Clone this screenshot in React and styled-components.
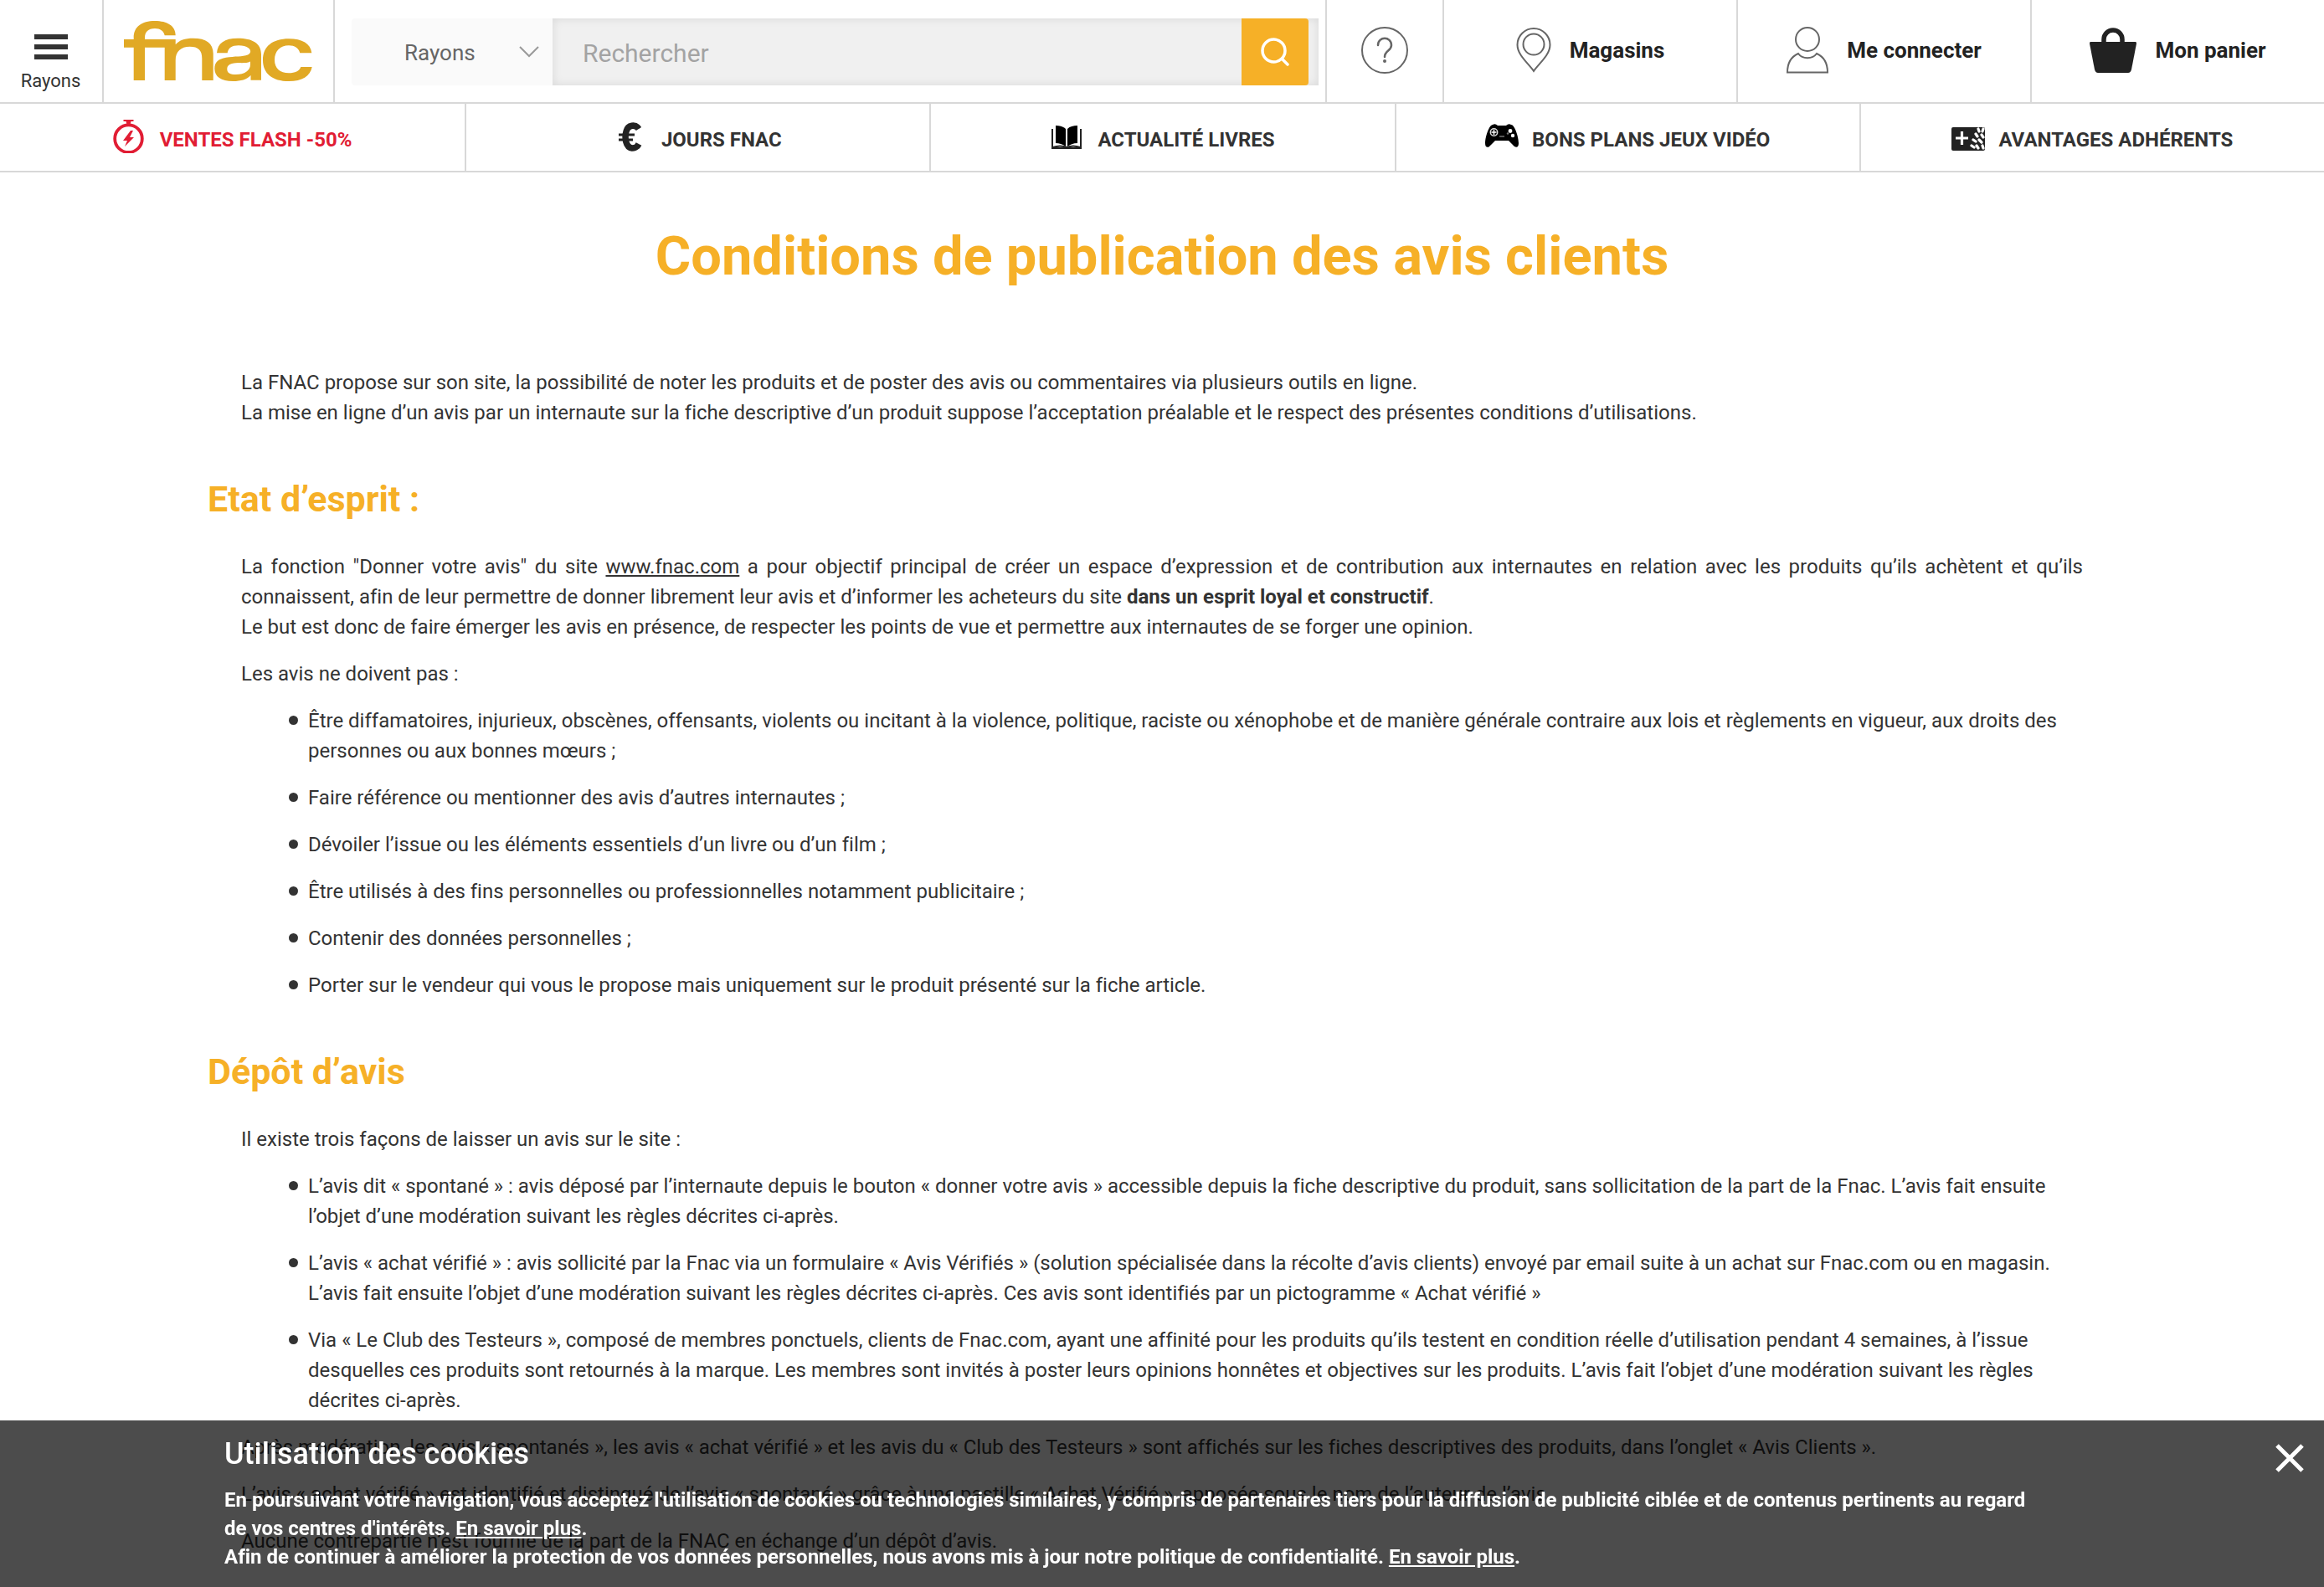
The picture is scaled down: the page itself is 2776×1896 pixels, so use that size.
import React from 'react';
import styled, { createGlobalStyle } from 'styled-components';

const Global = createGlobalStyle`
  *, *::before, *::after { box-sizing: border-box; }
  body {
    margin: 0;
    background: #fff;
    color: #333;
    font: 24px/36px Roboto, "Liberation Sans", sans-serif;
    text-rendering: optimizeSpeed;
  }
  a { color: inherit; }
  button, input, select { font-family: inherit; text-rendering: inherit; }
`;
const line = '#d8d8d8';

const TopBar = styled.header`
  display: flex;
  height: 124px;
  border-bottom: 2px solid ${line};
`;
const MenuButton = styled.button`
  width: 124px;
  padding: 41px 1px 0 0;
  border: 0;
  border-right: 2px solid ${line};
  background: none;
  color: #333;
  font-size: 22px;
  line-height: 30px;
  display: flex;
  flex-direction: column;
  align-items: center;
  gap: 11px;
`;
const Burger = styled.span`
  width: 40px;
  height: 30px;
  border-top: 6px solid #333;
  border-bottom: 6px solid #333;
  padding: 6px 0;
  background: #333 content-box;
`;
const Logo = styled.a`
  width: 276px;
  border-right: 2px solid ${line};
  padding: 24px 0 0 24px;
  line-height: 0;
`;
const Search = styled.form`
  flex: 1;
  display: flex;
  height: 80px;
  margin: 22px 8px 0 20px;
`;
const SelectBox = styled.label`
  width: 240px;
  display: flex;
  align-items: center;
  background: #fafafa;
  border-radius: 4px 0 0 4px;
  padding-right: 16px;
`;
const Select = styled.select`
  flex: 1;
  height: 80px;
  padding: 2px 0 0 63px;
  appearance: none;
  border: 0;
  background: none;
  color: #666;
  font-size: 26px;
`;
const Field = styled.div`
  flex: 1;
  display: flex;
  padding-right: 12px;
  background: #f0f0f0;
  box-shadow: inset 0 0 12px rgba(0, 0, 0, 0.1);
`;
const Input = styled.input`
  flex: 1;
  min-width: 0;
  border: 0;
  padding: 3px 36px 0;
  background: none;
  font-size: 30px;
  &::placeholder { color: #a3a3a3; opacity: 1; }
`;
const SearchButton = styled.button`
  width: 80px;
  border: 0;
  border-radius: 0 4px 4px 0;
  padding: 0;
  background: #f6b027;
  display: grid;
  place-items: center;
`;
const Account = styled.a`
  width: ${(p) => p.$width || 351}px;
  border-left: 2px solid ${line};
  display: flex;
  align-items: center;
  justify-content: center;
  gap: 22px;
  padding-bottom: 2px;
  font-size: 26px;
  font-weight: 700;
  color: #222;
  text-decoration: none;
`;
const Nav = styled.nav`
  display: grid;
  grid-template-columns: repeat(5, 1fr);
  height: 82px;
  border-bottom: 2px solid ${line};
`;
const NavLink = styled.a`
  display: flex;
  align-items: center;
  justify-content: center;
  gap: 16px;
  padding-top: 6px;
  border-left: 2px solid ${line};
  font-weight: 700;
  text-decoration: none;
  text-transform: uppercase;
  color: ${(p) => (p.$hot ? '#e11d34' : '#333')};
  &:first-child { border-left: 0; }
  svg { margin-top: -8px; }
`;
const Page = styled.main`
  margin: 0 248px;
`;
const Title = styled.h1`
  margin: 56px 0 89px;
  text-align: center;
  font-size: 65px;
  line-height: 88px;
  color: #f6b027;
`;
const Heading = styled.h2`
  margin: 56px 0 34px;
  font-size: 43px;
  line-height: 58px;
  color: #f6b027;
`;
const Text = styled.p`
  margin: 0 40px 20px;
  text-align: justify;
`;
const List = styled.ul`
  margin: 0 40px 20px;
  padding: 0 0 0 80px;
  list-style: none;
`;
const Item = styled.li`
  margin-bottom: 20px;
  &::before {
    content: '';
    display: inline-block;
    width: 11px;
    height: 11px;
    margin: 0 12px 0 -23px;
    border-radius: 50%;
    background: #333;
    vertical-align: 3px;
  }
`;
const Cookies = styled.aside`
  position: fixed;
  left: 0;
  right: 0;
  bottom: 0;
  display: flex;
  justify-content: space-between;
  align-items: flex-start;
  padding: 18px 24px 19px 268px;
  background: rgba(0, 0, 0, 0.7);
  color: #fff;
`;
const CookieCopy = styled.div`
  flex: 1;
  max-width: 2170px;
  font-weight: 700;
  line-height: 34px;
`;
const CookieTitle = styled.h2`
  margin: 0 0 16px;
  font-size: 36px;
  line-height: 44px;
  font-weight: 500;
`;
const CookieText = styled.p`
  margin: 0;
`;
const Close = styled.button`
  border: 0;
  padding: 10px 0 0;
  background: none;
  line-height: 0;
`;

const NavIcon = ({ children }) => (
  <svg width="40" height="40" viewBox="0 0 40 40" fill="none" aria-hidden="true">{children}</svg>
);
const Stopwatch = () => (
  <NavIcon>
    <circle cx="18.500" cy="22.700" r="16.300" stroke="#e11d34" strokeWidth="3.800" />
    <path d="M12.500 0h12v2h-3l-1 4h-4l-1-4h-3z" fill="#e11d34" />
    <path d="M21 13l-9 12h5l-3 7 11-11h-5l4-8z" fill="#e11d34" />
  </NavIcon>
);
const Euro = () => (
  <NavIcon>
    <path d="M29 11C25 5 16 6 14 14c-2 7-1 19 7 20 4 0 6-1 8-5" stroke="#222" strokeWidth="7.500" />
    <path d="M5 18h19M5 24h17" stroke="#222" strokeWidth="3.200" />
  </NavIcon>
);
const Book = () => (
  <NavIcon>
    <path d="M6 7c5 0 9 1 12 4v21c-3-2-7-4-12-4zM32 7c-5 0-9 1-12 4v21c3-2 7-4 12-4z" fill="#000" />
    <path d="M2 11v23h34V11" stroke="#222" strokeWidth="2" />
    <path d="M3 33c5-2 11-2 16 0 5-2 11-2 16 0" stroke="#222" strokeWidth="2" />
  </NavIcon>
);
const Pad = () => (
  <NavIcon>
    <path d="M9 6q3-2 6 1h10q3-3 6-1c4 0 9 14 9 22 0 6-4 6-7 2l-5-5H12l-5 5c-3 4-7 4-7-2C0 20 5 6 9 6z" fill="#000" />
    <circle cx="10.500" cy="15" r="4.200" stroke="#ddd" strokeWidth="1.500" />
    <path d="M10.500 12v6M7.500 15h6" stroke="#fff" strokeWidth="1.500" />
    <circle cx="30" cy="13.500" r="2.400" fill="#fff" />
    <circle cx="33" cy="19" r="2.200" fill="#fff" />
    <circle cx="27" cy="16.500" r="1.200" fill="#777" />
    <path d="M17 20h6" stroke="#555" strokeWidth="2" />
  </NavIcon>
);
const Card = () => (
  <NavIcon>
    <rect y="9" width="40" height="28" rx="2" fill="#222" />
    <path d="M12.500 14v16M5 22h15" stroke="#fff" strokeWidth="3.200" />
    <path d="M32 11l1 3M38 11l-1 3M29 17l2 3M36 18l2 3M26 24l3 2M33 24l3 3M24 31l3 2M30 31l2 3M37 31l1 3" stroke="#fff" strokeWidth="3.200" strokeLinecap="round" />
  </NavIcon>
);
const FnacLogo = () => (
  <svg width="226" height="74" viewBox="0 0 226 74" fill="#e1a925" aria-hidden="true">
    <path d="M0 23H11.700V21C11.700 8 21 1 37 1C52 1 61.700 7 61.700 18.300H48.700C47.500 13 43.500 10 37 10C29 10 25 14 25 21V23H61.700V29.300C66 24 73 21.700 82.700 21.700C98 21.700 106.700 27.500 106.700 40V72H93.300V46C93.300 36 89 31.700 78.700 31.700C68 31.700 61.700 37.500 61.700 48V72H48.700V32.700H25V72H11.700V32.700H0Z" />
    <path d="M111 39.300C112 27.500 120 21.700 136 21.700C154 21.700 164 28 164 41V71.700H151.500V66C146.500 71 140 73 130.300 73C116 73 108.300 67.500 108.300 58C108.300 50 113 46.500 122 44.800C132 43 142 44 148 41.500C152 39.500 152 36 149 33.500C146 31 142 30.300 137 30.300C129 30.300 124.500 33.500 123.700 39.300ZM151 49.500C145 52.500 137 50 129 52C125 53.200 123.300 55 123.300 58.700C123.300 63 127 65 133.700 65C144 65 151 60.500 151 53Z" fillRule="evenodd" />
    <path d="M224.300 39.300H210.300C208.500 33 204 30.300 197 30.300C186.500 30.300 180 37 180 47.700C180 57.500 186.500 63.300 197 63.300C204.500 63.300 209.500 61 211.300 56H224.700C222.500 67 213 73 197 73C177.500 73 166 64 166 47.700C166 31.500 177.500 22.300 197 22.300C213 22.300 223 28 224.300 39.300Z" />
  </svg>
);
const PinIcon = () => (
  <svg width="42" height="54" viewBox="0 0 42 54" fill="none" stroke="#666" strokeWidth="2" aria-hidden="true">
    <path d="M21 52C15 43 1.500 33 1.500 20.500a19.500 19.500 0 0 1 39 0C40.500 33 27 43 21 52z" />
    <circle cx="21" cy="20" r="12.500" />
  </svg>
);
const UserIcon = () => (
  <svg width="50" height="56" viewBox="0 0 50 56" fill="none" stroke="#666" strokeWidth="2" aria-hidden="true">
    <circle cx="25" cy="15" r="14" />
    <path d="M14 32C5 36 1 43 1 54.500H49C49 43 45 36 36 32C31 39 19 39 14 32z" />
  </svg>
);
const BasketIcon = () => (
  <svg width="56" height="54" viewBox="0 0 56 54" aria-hidden="true">
    <path d="M17 18v-4a11 11 0 0 1 22 0v4" fill="none" stroke="#222" strokeWidth="5.500" />
    <path d="M1 17h54q1 0 1 2l-6 31q-1 4-4 4H10q-3 0-4-4L0 19q0-2 1-2z" fill="#222" />
  </svg>
);

const nav = [
  ['Ventes flash -50%', Stopwatch, true],
  ['Jours Fnac', Euro],
  ['Actualité livres', Book],
  ['Bons plans jeux vidéo', Pad],
  ['Avantages adhérents', Card],
];

export default function App() {
  return (
    <>
      <Global />
      <TopBar>
        <MenuButton type="button"><Burger />Rayons</MenuButton>
        <Logo href="#" aria-label="Fnac"><FnacLogo /></Logo>
        <Search role="search">
          <SelectBox>
            <Select aria-label="Rayons"><option>Rayons</option></Select>
            <svg width="24" height="14" viewBox="0 0 24 14" fill="none" stroke="#999" strokeWidth="2" aria-hidden="true"><path d="M1 1l11 11L23 1" /></svg>
          </SelectBox>
          <Field>
            <Input type="search" aria-label="Rechercher" placeholder="Rechercher" />
            <SearchButton type="submit" aria-label="Lancer la recherche">
              <svg width="34" height="34" viewBox="0 0 34 34" fill="none" stroke="#fff" strokeWidth="3.500" strokeLinecap="round" aria-hidden="true"><circle cx="15.500" cy="15.500" r="13.500" /><path d="M25.500 25.500l6.500 6.500" /></svg>
            </SearchButton>
          </Field>
        </Search>
        <Account href="#" $width={140} aria-label="Aide">
          <svg width="56" height="56" viewBox="0 0 56 56" fill="none" stroke="#666" strokeWidth="2" strokeLinecap="round" aria-hidden="true"><circle cx="28" cy="28" r="27" /><path d="M20 22c0-11 16-11 16 0 0 7-8 6-8 14" strokeWidth="2.500" /><circle cx="28" cy="41" r="2" fill="#666" stroke="none" /></svg>
        </Account>
        <Account href="#"><PinIcon />Magasins</Account>
        <Account href="#"><UserIcon />Me connecter</Account>
        <Account href="#"><BasketIcon />Mon panier</Account>
      </TopBar>
      <Nav>
        {nav.map(([label, Icon, hot]) => (
          <NavLink key={label} href="#" $hot={hot}><Icon />{label}</NavLink>
        ))}
      </Nav>
      <Page>
        <Title>Conditions de publication des avis clients</Title>
        <Text>La FNAC propose sur son site, la possibilité de noter les produits et de poster des avis ou commentaires via plusieurs outils en ligne.<br />La mise en ligne d’un avis par un internaute sur la fiche descriptive d’un produit suppose l’acceptation préalable et le respect des présentes conditions d’utilisations.</Text>
        <Heading>Etat d’esprit :</Heading>
        <Text>La fonction "Donner votre avis" du site <a href="#">www.fnac.com</a> a pour objectif principal de créer un espace d’expression et de contribution aux internautes en relation avec les produits qu’ils achètent et qu’ils connaissent, afin de leur permettre de donner librement leur avis et d’informer les acheteurs du site <strong>dans un esprit loyal et constructif</strong>.<br />Le but est donc de faire émerger les avis en présence, de respecter les points de vue et permettre aux internautes de se forger une opinion.</Text>
        <Text>Les avis ne doivent pas :</Text>
        <List>
          <Item>Être diffamatoires, injurieux, obscènes, offensants, violents ou incitant à la violence, politique, raciste ou xénophobe et de manière générale contraire aux lois et règlements en vigueur, aux droits des personnes ou aux bonnes mœurs ;</Item>
          <Item>Faire référence ou mentionner des avis d’autres internautes ;</Item>
          <Item>Dévoiler l’issue ou les éléments essentiels d’un livre ou d’un film ;</Item>
          <Item>Être utilisés à des fins personnelles ou professionnelles notamment publicitaire ;</Item>
          <Item>Contenir des données personnelles ;</Item>
          <Item>Porter sur le vendeur qui vous le propose mais uniquement sur le produit présenté sur la fiche article.</Item>
        </List>
        <Heading>Dépôt d’avis</Heading>
        <Text>Il existe trois façons de laisser un avis sur le site :</Text>
        <List>
          <Item>L’avis dit « spontané » : avis déposé par l’internaute depuis le bouton « donner votre avis » accessible depuis la fiche descriptive du produit, sans sollicitation de la part de la Fnac. L’avis fait ensuite l’objet d’une modération suivant les règles décrites ci-après.</Item>
          <Item>L’avis « achat vérifié » : avis sollicité par la Fnac via un formulaire « Avis Vérifiés » (solution spécialisée dans la récolte d’avis clients) envoyé par email suite à un achat sur Fnac.com ou en magasin. L’avis fait ensuite l’objet d’une modération suivant les règles décrites ci-après. Ces avis sont identifiés par un pictogramme « Achat vérifié »</Item>
          <Item>Via « Le Club des Testeurs », composé de membres ponctuels, clients de Fnac.com, ayant une affinité pour les produits qu’ils testent en condition réelle d’utilisation pendant 4 semaines, à l’issue desquelles ces produits sont retournés à la marque. Les membres sont invités à poster leurs opinions honnêtes et objectives sur les produits. L’avis fait l’objet d’une modération suivant les règles décrites ci-après.</Item>
        </List>
        <Text>Après modération, les avis « spontanés », les avis « achat vérifié » et les avis du « Club des Testeurs » sont affichés sur les fiches descriptives des produits, dans l’onglet « Avis Clients ».</Text>
        <Text>L’avis « achat vérifié » est identifié et distingué de l’avis « spontané » grâce à une pastille « Achat Vérifié », apposée sous le nom de l’auteur de l’avis.</Text>
        <Text>Aucune contrepartie n’est fournie de la part de la FNAC en échange d’un dépôt d’avis.</Text>
      </Page>
      <Cookies aria-label="Cookies">
        <CookieCopy>
          <CookieTitle>Utilisation des cookies</CookieTitle>
          <CookieText>En poursuivant votre navigation, vous acceptez l'utilisation de cookies ou technologies similaires, y compris de partenaires tiers pour la diffusion de publicité ciblée et de contenus pertinents au regard de vos centres d'intérêts. <a href="#">En savoir plus</a>.</CookieText>
          <CookieText>Afin de continuer à améliorer la protection de vos données personnelles, nous avons mis à jour notre politique de confidentialité. <a href="#">En savoir plus</a>.</CookieText>
        </CookieCopy>
        <Close type="button" aria-label="Fermer">
          <svg width="34" height="34" viewBox="0 0 34 34" stroke="#fff" strokeWidth="5" aria-hidden="true"><path d="M2 2l30 30M32 2L2 32" /></svg>
        </Close>
      </Cookies>
    </>
  );
}
